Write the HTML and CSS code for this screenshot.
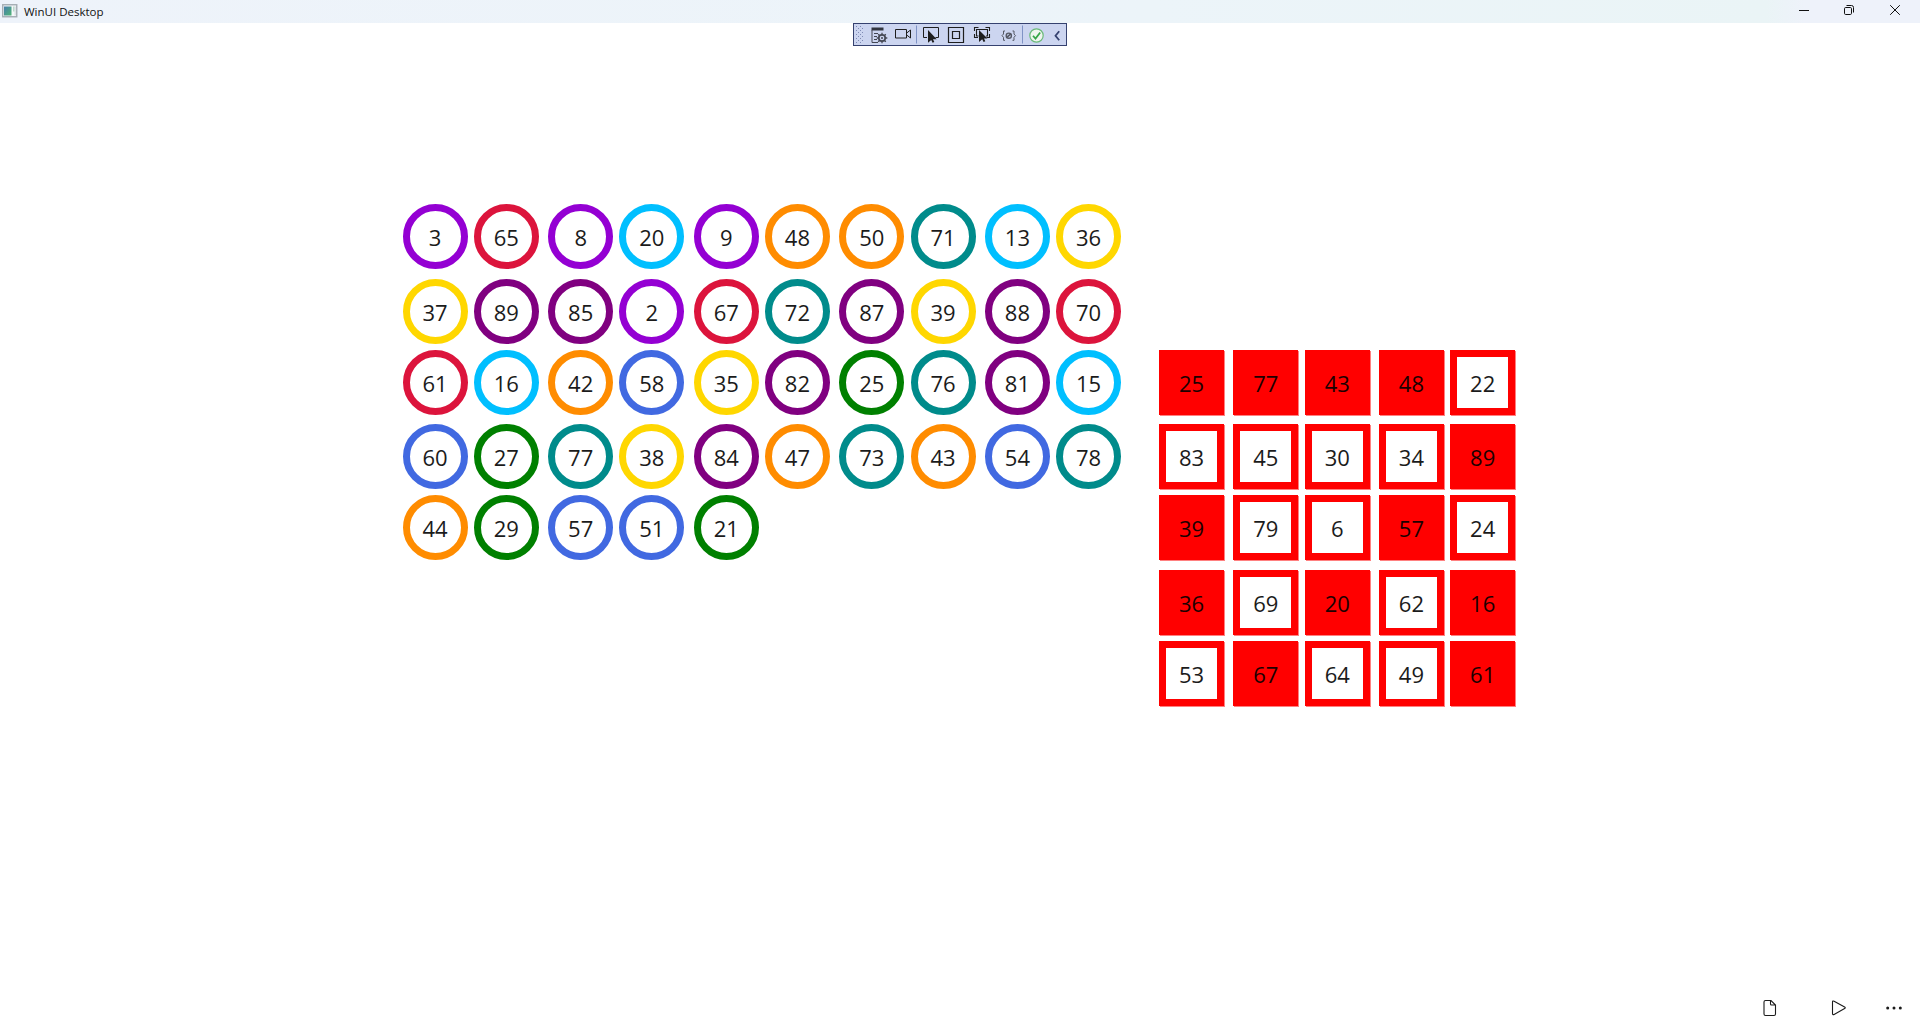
FILE: index.html
```html
<!DOCTYPE html>
<html lang="en">
<head>
<meta charset="utf-8">
<title>WinUI Desktop</title>
<link rel="stylesheet" href="styles.css">
</head>
<body>
<header class="titlebar">
  <svg class="app-icon" width="16" height="14" viewBox="0 0 16 14"><defs><linearGradient id="g" x1="0" y1="0" x2="1" y2="1"><stop offset="0" stop-color="#477eac"/><stop offset="1" stop-color="#4fb575"/></linearGradient></defs><rect x=".75" y=".75" width="14" height="12" fill="#f5f7f9" stroke="#a3acb2" stroke-width="1.4"/><rect x="2" y="2.5" width="7.5" height="9" fill="url(#g)"/><rect x="11" y="2.5" width="1.6" height="5" fill="#b9d9c8"/><rect x="12.6" y="2.5" width="1.2" height="9" fill="#d5dde2"/></svg>
  <span class="title">WinUI Desktop</span>
  <div class="window-buttons">
    <svg width="46" height="23" viewBox="0 0 46 23"><path d="M18 10.5h10"/></svg>
    <svg width="45" height="23" viewBox="0 0 45 23"><rect x="17.5" y="7.5" width="7" height="7" rx="1.2"/><path d="M19.5 5.5h5q2 0 2 2v5"/></svg>
    <svg width="46" height="23" viewBox="0 0 46 23"><path d="M18.2 5.2l9.6 9.6M27.8 5.2l-9.6 9.6"/></svg>
  </div>
</header>
<nav class="debugbar">
  <svg width="212" height="21" viewBox="0 0 212 21" fill="none" stroke="#1e1e1e">
    <defs><pattern id="dots" width="4" height="4" patternUnits="userSpaceOnUse"><path d="M0 0h1v1H0zM2 2h1v1H2z" fill="#808bb5" stroke="none"/></pattern></defs>
    <rect x="2" y="2" width="7" height="17" fill="url(#dots)" stroke="none"/>
    <g stroke="#444753"><path d="M17.500 5h12" stroke-width="3" stroke="#333640"/><path d="M18 6v12.500h6M20 9.500h4M20 12.500h3M20 15.500h3"/><circle cx="28" cy="14" r="3.200" stroke-width="1.700"/><circle cx="28" cy="14" r="1" stroke="none" fill="#444753"/><path d="M28 8.700v2M28 17.300v2M22.700 14h2M31.300 14h2M24.200 10.200l1.300 1.300M31.800 10.200l-1.300 1.300M24.200 17.800l1.300-1.300M31.800 17.800l-1.300-1.300" stroke-width="1.300"/></g>
    <path d="M41.500 5.500h11v8.500h-11zM52.700 9l3.800-3v8l-3.800-3"/>
    <path d="M62.500 1.500v18" stroke="#8093c5"/>
    <path d="M73 13.500h-3.500v-10h15v10h-3"/><path d="M74 6v12.700l3.200-2.700 1.400 2.700 1.700-.8-1.300-2.700h3.700z" fill="#1e1e1e" stroke="none"/>
    <path d="M94.500 3.500h15v15h-15zM98.500 7.500h7v7h-7z" stroke-width="1.200"/>
    <path d="M120.500 7V3.500h4M131.500 3.500h4V7M120.500 10v3.500h3.500M132.500 13.500h3V10M124.500 12h-2V5.500h11V12h-1.500" stroke-width="1.100"/><path d="M125 6v12l3.200-2.700 1.400 2.700 1.700-.8-1.300-2.700h3.500z" fill="#1e1e1e" stroke="none"/>
    <g stroke="#555965"><path d="M151 7h-1.500v3l-1.500 1.700 1.500 1.600v3h1.500M158.500 7h1.500v3l1.500 1.700-1.500 1.600v3h-1.500"/><circle cx="154.800" cy="11.700" r="2.600" stroke-width="1.400"/><path d="M152.500 13.700l4.600-4" stroke-width="1.700"/></g>
    <path d="M168.500 1.500v18" stroke="#8093c5"/>
    <circle cx="182.500" cy="11.500" r="6.700" fill="#eef5ee" stroke="#6aba79" stroke-width="1.200"/><path d="M179 11.700l2.500 2.900 4.700-6.200" stroke="#35a647" stroke-width="1.700"/>
    <path d="M205.200 7.300l-3.700 4.500 3.700 4.500" stroke="#35416f" stroke-width="1.800"/>
  </svg>
</nav>
<main class="boards">
  <section class="balls">
    <b class="violet">3</b><b class="crimson">65</b><b class="violet">8</b><b class="sky">20</b><b class="violet">9</b><b class="orange">48</b><b class="orange">50</b><b class="teal">71</b><b class="sky">13</b><b class="gold">36</b>
    <b class="gold">37</b><b class="purple">89</b><b class="purple">85</b><b class="violet">2</b><b class="crimson">67</b><b class="teal">72</b><b class="purple">87</b><b class="gold">39</b><b class="purple">88</b><b class="crimson">70</b>
    <b class="crimson">61</b><b class="sky">16</b><b class="orange">42</b><b class="blue">58</b><b class="gold">35</b><b class="purple">82</b><b class="green">25</b><b class="teal">76</b><b class="purple">81</b><b class="sky">15</b>
    <b class="blue">60</b><b class="green">27</b><b class="teal">77</b><b class="gold">38</b><b class="purple">84</b><b class="orange">47</b><b class="teal">73</b><b class="orange">43</b><b class="blue">54</b><b class="teal">78</b>
    <b class="orange">44</b><b class="green">29</b><b class="blue">57</b><b class="blue">51</b><b class="green">21</b>
  </section>
  <section class="card">
    <b class="hit">25</b><b class="hit">77</b><b class="hit">43</b><b class="hit">48</b><b>22</b>
    <b>83</b><b>45</b><b>30</b><b>34</b><b class="hit">89</b>
    <b class="hit">39</b><b>79</b><b>6</b><b class="hit">57</b><b>24</b>
    <b class="hit">36</b><b>69</b><b class="hit">20</b><b>62</b><b class="hit">16</b>
    <b>53</b><b class="hit">67</b><b>64</b><b>49</b><b class="hit">61</b>
  </section>
</main>
<footer class="commands">
  <svg width="14" height="18" viewBox="0 0 14 18"><path d="M2.500 1.500h5.500l4.500 4.500v9q0 1.500-1.500 1.500h-8.500q-1.500 0-1.500-1.500v-12q0-1.500 1.500-1.500zM7.500 1.500v3.500q0 1 1 1h4"/></svg>
  <svg width="16" height="18" viewBox="0 0 16 18"><path d="M1.500 3.200q0-1.800 1.600-1l10.500 5.800q1.300.8 0 1.600l-10.500 5.800q-1.600.8-1.600-1z"/></svg>
  <svg width="18" height="6" viewBox="0 0 18 6"><g fill="#1b1b1b" stroke="none"><circle cx="2.700" cy="3" r="1.500"/><circle cx="9" cy="3" r="1.500"/><circle cx="15.300" cy="3" r="1.500"/></g></svg>
</footer>
</body>
</html>
```
FILE: styles.css
```css
* { box-sizing: border-box; }
body {
  margin: 0;
  height: 1032px;
  display: flex;
  flex-direction: column;
  background: #fff;
  color: #1b1b1b;
  font-family: "Open Sans", "Noto Sans", sans-serif;
  overflow: hidden;
}
svg { display: block; flex: none; }
.titlebar {
  flex: none;
  height: 23px;
  display: flex;
  align-items: center;
  padding-left: 2px;
  background: linear-gradient(90deg, #eef3fa 0%, #ecf4f9 60%, #eaf4f6 92%, #eef2fa 94%);
}
.app-icon { margin-top: -1px; }
.title {
  margin-left: 6px;
  font-size: 11.5px;
  line-height: 23px;
  letter-spacing: 0;
  color: #111;
}
.window-buttons { display: flex; margin-left: auto; padding-right: 2px; }
.window-buttons svg { fill: none; stroke: #111; }
.debugbar {
  flex: none;
  align-self: center;
  width: 214px;
  height: 23px;
  border: 1px solid #35416f;
  background: #ccd5f0;
}
.boards {
  flex: 1;
  display: flex;
  align-items: flex-start;
  padding: 158px 0 0 402.6px;
}
.balls, .card { display: grid; }
.balls {
  width: 756.4px;
  grid-template-columns: 71.2px 74.4px 71.2px 74.4px 71.2px 74.4px 71.2px 74.4px 71.2px 65px;
  grid-template-rows: 75px 71px 74px 71px 65px;
}
.card {
  margin-top: 146px;
  grid-template-columns: 74.4px 71.4px 74.2px 71.2px 65px;
  grid-template-rows: 74px 71px 75px 71px 65px;
}
.balls b, .card b {
  width: 65px;
  height: 65px;
  display: flex;
  align-items: center;
  justify-content: center;
  border: 7px solid;
  font-size: 22px;
  font-weight: 400;
  line-height: 30px;
  color: #1b1b1b;
}
.balls b { border-radius: 50%; }
.card b { border-color: #f00; box-shadow: 1px 1px 0 #ff8080; }
.card .hit { background: #f00; color: #1b0000; }
.balls .violet { border-color: darkviolet; }
.balls .crimson { border-color: crimson; }
.balls .sky { border-color: deepskyblue; }
.balls .orange { border-color: darkorange; }
.balls .teal { border-color: darkcyan; }
.balls .gold { border-color: gold; }
.balls .purple { border-color: purple; }
.balls .blue { border-color: royalblue; }
.balls .green { border-color: green; }
.commands {
  flex: none;
  height: 48px;
  display: flex;
  align-items: center;
  justify-content: flex-end;
  padding-right: 17px;
}
.commands svg { fill: none; stroke: #1b1b1b; stroke-width: 1.1; }
.commands svg:nth-child(2) { margin-left: 54px; }
.commands svg:nth-child(3) { margin-left: 38px; }
```
